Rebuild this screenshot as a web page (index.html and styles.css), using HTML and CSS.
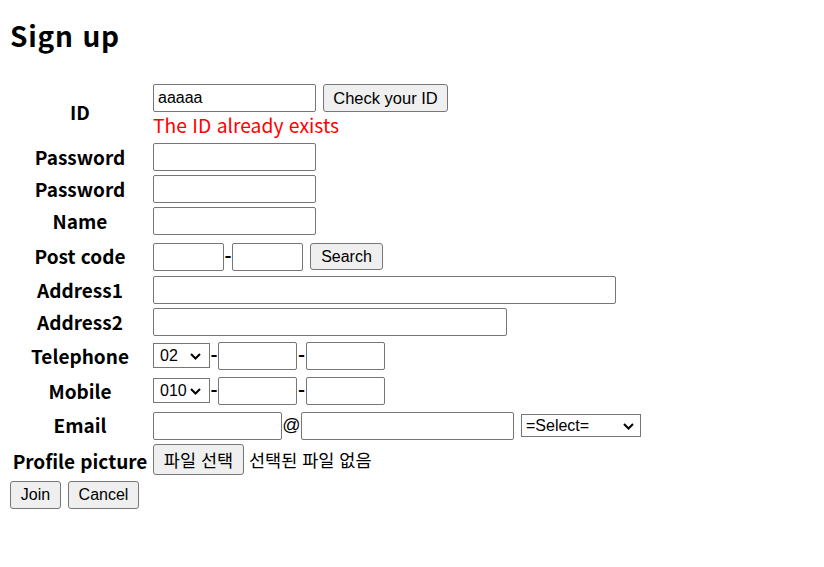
FILE: index.html
```html
<!DOCTYPE html>
<html lang="ko">
<head>
<meta charset="utf-8">
<title>Sign up</title>
<link rel="stylesheet" href="styles.css">
</head>
<body>
<h2 class="title">Sign up</h2>
<form class="signup">
<table class="form-table">
  <tr>
    <th class="label">ID</th>
    <td>
      <div class="field">
        <input type="text" class="w-id" value="aaaaa">
        <button type="button" class="btn btn-check">Check your ID</button>
      </div>
      <div class="error">The ID already exists</div>
    </td>
  </tr>
  <tr>
    <th class="label">Password</th>
    <td><div class="field"><input type="password" class="w-id"></div></td>
  </tr>
  <tr>
    <th class="label">Password</th>
    <td><div class="field"><input type="password" class="w-id"></div></td>
  </tr>
  <tr>
    <th class="label">Name</th>
    <td><div class="field"><input type="text" class="w-id"></div></td>
  </tr>
  <tr>
    <th class="label">Post code</th>
    <td>
      <div class="field field-post">
        <input type="text" class="w-post">
        <span class="dash">-</span>
        <input type="text" class="w-post">
        <button type="button" class="btn btn-search">Search</button>
      </div>
    </td>
  </tr>
  <tr>
    <th class="label">Address1</th>
    <td><div class="field"><input type="text" class="w-addr1"></div></td>
  </tr>
  <tr>
    <th class="label">Address2</th>
    <td><div class="field"><input type="text" class="w-addr2"></div></td>
  </tr>
  <tr>
    <th class="label">Telephone</th>
    <td>
      <div class="field field-phone">
        <span class="select-wrap sw-area">
          <select class="sel sel-area"><option>02</option></select>
          <svg class="chev" width="11" height="7" viewBox="0 0 11 7"><path d="M1 1 L5.5 5.5 L10 1" fill="none" stroke="#000" stroke-width="2"/></svg>
        </span>
        <span class="dash">-</span>
        <input type="text" class="w-phone">
        <span class="dash dash-wide">-</span>
        <input type="text" class="w-phone">
      </div>
    </td>
  </tr>
  <tr>
    <th class="label">Mobile</th>
    <td>
      <div class="field field-phone">
        <span class="select-wrap sw-area">
          <select class="sel sel-area"><option>010</option></select>
          <svg class="chev" width="11" height="7" viewBox="0 0 11 7"><path d="M1 1 L5.5 5.5 L10 1" fill="none" stroke="#000" stroke-width="2"/></svg>
        </span>
        <span class="dash">-</span>
        <input type="text" class="w-phone">
        <span class="dash dash-wide">-</span>
        <input type="text" class="w-phone">
      </div>
    </td>
  </tr>
  <tr>
    <th class="label">Email</th>
    <td>
      <div class="field field-email">
        <input type="text" class="w-mail1">
        <span class="at">@</span>
        <input type="text" class="w-mail2">
        <span class="select-wrap sw-mail">
          <select class="sel sel-mail"><option>=Select=</option></select>
          <svg class="chev" width="11" height="7" viewBox="0 0 11 7"><path d="M1 1 L5.5 5.5 L10 1" fill="none" stroke="#000" stroke-width="2"/></svg>
        </span>
      </div>
    </td>
  </tr>
  <tr>
    <th class="label">Profile picture</th>
    <td>
      <div class="field field-file">
        <button type="button" class="btn btn-file">파일 선택</button>
        <span class="file-name">선택된 파일 없음</span>
      </div>
    </td>
  </tr>
  <tr>
    <td class="actions" colspan="2">
      <div class="action-row">
        <button type="submit" class="btn btn-join">Join</button>
        <button type="reset" class="btn btn-cancel">Cancel</button>
      </div>
    </td>
  </tr>
</table>
</form>
</body>
</html>
```
FILE: styles.css
```css
body {
  margin: 8px;
  font-family: "Noto Sans CJK KR", "Noto Sans", sans-serif;
  color: #000;
  background: #fff;
}

.title {
  margin: 13px 0 32px 2px;
  font-size: 28px;
  line-height: 28px;
  font-weight: 700;
  letter-spacing: 0.8px;
}

.form-table {
  border-collapse: separate;
  border-spacing: 2px;
  margin-top: 0;
}

.form-table th,
.form-table td {
  padding: 1px;
}

.label {
  width: 138px;
  text-align: center;
  vertical-align: middle;
  font-size: 19px;
  line-height: 26px;
  font-weight: 700;
  white-space: nowrap;
}

.form-table td {
  vertical-align: top;
}

.field {
  display: flex;
  align-items: center;
  height: 28px;
  box-sizing: border-box;
}

.field-post {
  height: 33px;
  padding-top: 4px;
  align-items: flex-start;
}

.field-phone {
  height: 31px;
  padding-top: 2px;
  align-items: flex-start;
}

.field-phone .select-wrap {
  margin-top: 1px;
}

.field-email {
  height: 30px;
  padding-top: 2px;
  align-items: flex-start;
}

.field-email .select-wrap {
  margin-top: 2px;
}

.field-file {
  height: 33px;
  align-items: flex-start;
}

input[type="text"],
input[type="password"] {
  box-sizing: border-box;
  height: 28px;
  margin: 0;
  padding: 1px 4px;
  border: 1px solid #767676;
  border-radius: 2px;
  font-family: "Liberation Sans", Arial, sans-serif;
  font-size: 16px;
  color: #000;
  background: #fff;
}

.w-id { width: 163px; }
.w-post { width: 71px; }
.w-addr1 { width: 463px; }
.w-addr2 { width: 354px; }
.w-phone { width: 79px; }
.w-mail1 { width: 129px; }
.w-mail2 { width: 213px; }

.btn {
  box-sizing: border-box;
  height: 28px;
  margin: 0;
  padding: 0 8px;
  border: 1px solid #767676;
  border-radius: 3px;
  background: #efefef;
  font-family: "Liberation Sans", Arial, "Noto Sans CJK KR", sans-serif;
  font-size: 16px;
  color: #000;
}

.btn-check { width: 125px; margin-left: 7px; font-size: 16.5px; }
.btn-search { width: 73px; margin-left: 7px; height: 27px; }
.btn-file {
  width: 91px;
  height: 31px;
  font-family: "Noto Sans CJK KR", sans-serif;
  font-size: 17.5px;
  padding: 0;
}

.action-row {
  display: flex;
}

.btn-join { width: 51px; }
.btn-cancel { width: 71px; margin-left: 7px; }

.dash {
  display: inline-block;
  width: 8px;
  text-align: center;
  font-size: 19px;
  font-weight: 700;
  line-height: 26px;
}

.dash-wide { width: 9px; }

.at {
  display: inline-block;
  width: 19px;
  text-align: center;
  font-family: "Liberation Sans", Arial, sans-serif;
  font-size: 18px;
  line-height: 26px;
}

.select-wrap {
  position: relative;
  display: inline-flex;
}

.sel {
  appearance: none;
  -webkit-appearance: none;
  box-sizing: border-box;
  margin: 0;
  padding: 0 0 0 6px;
  border: 1px solid #767676;
  border-radius: 0;
  background: #fff;
  font-family: "Liberation Sans", Arial, sans-serif;
  font-size: 16px;
  color: #000;
}

.sel-area { width: 57px; height: 25px; }
.sel-mail { width: 120px; height: 23px; padding-left: 4px; }

.chev {
  position: absolute;
  top: 50%;
  margin-top: -3px;
  pointer-events: none;
}

.sw-area .chev { right: 9px; }
.sw-mail { margin-left: 7px; }
.sw-mail .chev { right: 7px; }

.file-name {
  margin-left: 5px;
  font-size: 17.5px;
  line-height: 31px;
}

.error {
  height: 27px;
  font-size: 19.3px;
  line-height: 27px;
  color: #ff0000;
}

.actions {
  padding-left: 0 !important;
}
```
